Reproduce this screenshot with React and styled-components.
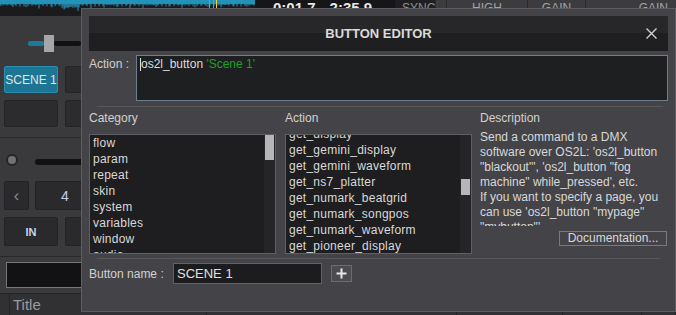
import React from "react";
import styled, { createGlobalStyle } from "styled-components";

const GlobalStyle = createGlobalStyle`
  html, body { margin: 0; padding: 0; background: #3a3a3d; }
  body { font-family: "Liberation Sans", Arial, sans-serif; }
  * { box-sizing: border-box; }
`;

const Screen = styled.div`
  position: relative;
  width: 676px;
  height: 315px;
  overflow: hidden;
  background: #3a3a3d;
  display: flex;
  flex-direction: column;
  font-family: "Liberation Sans", Arial, sans-serif;
`;

/* ---------- background skin ---------- */
const TopStrip = styled.div`
  display: flex;
  height: 16px;
  flex: none;
`;
const WaveWrap = styled.div`
  width: 255px;
  height: 16px;
  background: #1b1b1d;
`;
const TimeBox = styled.div`
  width: 140px;
  display: flex;
  gap: 14px;
  padding-left: 18px;
  background: #161618;
  color: #e8e8e8;
  font-weight: bold;
  font-size: 15px;
  line-height: 16px;
`;
const SyncBox = styled.div`
  width: 40px;
  background: #1f1f21;
  color: #8e8e90;
  font-size: 12px;
  line-height: 16px;
  padding-left: 7px;
`;
const HeadCell = styled.div`
  width: ${(p) => p.$w}px;
  flex: ${(p) => (p.$grow ? 1 : "none")};
  background: #3c3c3f;
  border-left: 1px solid #2a2a2c;
  color: #a4a4a6;
  font-size: 12px;
  line-height: 17px;
  text-align: ${(p) => p.$align || "center"};
  padding-right: ${(p) => p.$pr || 0}px;
`;

const Upper = styled.div`
  display: flex;
  height: 277px;
  flex: none;
`;
const LeftPanel = styled.div`
  width: 81px;
  display: flex;
  flex-direction: column;
`;
const SliderRow = styled.div`
  margin-top: 19px;
  height: 17px;
  display: flex;
  align-items: center;
  padding-left: 28px;
`;
const Track = styled.div`
  height: 5px;
  width: ${(p) => (p.$w ? p.$w + "px" : "auto")};
  flex: ${(p) => (p.$w ? "none" : 1)};
  background: ${(p) => p.$c};
  border-radius: 2px;
`;
const Handle = styled.div`
  width: 10px;
  height: 17px;
  background: #a6a6a8;
`;
const PadGrid = styled.div`
  margin-top: 14px;
  padding-left: 4px;
  display: grid;
  grid-template-columns: 54px 54px;
  grid-auto-rows: 27px;
  gap: 7px;
`;
const Pad = styled.div`
  border: 1px solid ${(p) => (p.$on ? "#2b8db0" : "#232325")};
  background: ${(p) => (p.$on ? "#1b7593" : "#2c2c2f")};
  color: #e4e4e4;
  font-size: 12px;
  display: flex;
  align-items: center;
  justify-content: center;
  border-radius: 2px;
`;
const Rule = styled.div`
  height: 1px;
  margin-top: ${(p) => p.$mt}px;
  background: #2a2a2c;
`;
const KnobRow = styled.div`
  margin-top: 15px;
  height: 14px;
  display: flex;
  align-items: center;
  padding-left: 6px;
  gap: 17px;
`;
const Knob = styled.div`
  width: 12px;
  height: 12px;
  border-radius: 50%;
  background: #727274;
  border: 2px solid #252527;
`;
const PitchBar = styled.div`
  flex: 1;
  height: 6px;
  margin-top: 4px;
  border-radius: 3px 0 0 3px;
  background: #111113;
`;
const NavRow = styled.div`
  margin-top: ${(p) => p.$mt}px;
  height: 29px;
  display: flex;
  gap: ${(p) => p.$gap}px;
  padding-left: 4px;
`;
const NavBtn = styled.div`
  width: ${(p) => p.$w}px;
  flex: none;
  background: #2a2a2d;
  border: 1px solid #232325;
  border-radius: 2px;
  display: flex;
  align-items: center;
  justify-content: center;
  color: ${(p) => p.$c || "#c8d4e4"};
  font-size: ${(p) => p.$fs || 12}px;
  font-weight: ${(p) => (p.$bold ? "bold" : "normal")};
`;
const SearchBox = styled.div`
  margin: 5px 0 0 6px;
  height: 26px;
  background: #121214;
  border: 1px solid #75757a;
  border-right: none;
`;
const TableHead = styled.div`
  flex: 1;
  display: flex;
  background: #313134;
  border-top: 1px solid #232325;
`;
const Col = styled.div`
  width: ${(p) => p.$w}px;
  flex: ${(p) => (p.$grow ? 1 : "none")};
  border-right: 1px solid #232325;
  color: #9a9a9c;
  font-size: 15px;
  line-height: 22px;
  padding-left: 3px;
`;

/* ---------- dialog ---------- */
const Dialog = styled.div`
  position: absolute;
  left: 81px;
  top: 8px;
  width: 595px;
  height: 304px;
  background: #444448;
  border: 1px solid #5e5e62;
  display: flex;
  flex-direction: column;
  padding: 7px 7px 0 7px;
  color: #d4d4d4;
  font-size: 12px;
`;
const TitleBar = styled.div`
  height: 35px;
  flex: none;
  position: relative;
  background: linear-gradient(#27272a 0 50%, #1f1f21 50% 100%);
  display: flex;
  align-items: center;
  justify-content: center;
  font-weight: bold;
  font-size: 13px;
  color: #dadada;
`;
const CloseBtn = styled.div`
  position: absolute;
  right: 11px;
  top: 12px;
  width: 11px;
  height: 11px;
  display: flex;
`;
const ActionRow = styled.div`
  margin-top: 4px;
  display: flex;
`;
const RowLabel = styled.div`
  width: ${(p) => p.$w}px;
  flex: none;
  line-height: 16px;
  padding-top: ${(p) => p.$pt || 0}px;
  color: #d0d0d0;
`;
const ActionField = styled.div`
  flex: 1;
  height: 46px;
  background: #1e1f21;
  border: 1px solid #6e7f90;
  padding: 0 3px;
  line-height: 16px;
  color: #dcdcdc;
  display: flex;
  align-items: flex-start;
`;
const Caret = styled.span`
  width: 1px;
  height: 13px;
  margin-top: 2px;
  background: #e0e0e0;
  flex: none;
`;
const Green = styled.span`
  color: #22a022;
  white-space: pre;
`;
const Separator = styled.div`
  height: 1px;
  background: #58585c;
  margin: ${(p) => p.$m};
  flex: none;
`;
const Columns = styled.div`
  margin-top: 3px;
  display: grid;
  grid-template-columns: 187px 187px 187px;
  column-gap: 9px;
  align-items: start;
`;
const ColBox = styled.div`
  display: flex;
  flex-direction: column;
  margin-left: ${(p) => p.$ml || 0}px;
`;
const ColHead = styled.div`
  height: 16px;
  line-height: 16px;
  color: #d0d0d0;
`;
const ListBox = styled.div`
  margin-top: 8px;
  height: 120px;
  background: #1e1e20;
  border: 1px solid #606064;
  display: flex;
  overflow: hidden;
`;
const ListItems = styled.div`
  flex: 1;
  overflow: hidden;
  padding-left: 3px;
`;
const ListInner = styled.div`
  margin-top: ${(p) => p.$offset}px;
`;
const Item = styled.div`
  height: 16px;
  line-height: 16px;
  color: #d8d8d8;
  white-space: nowrap;
  letter-spacing: 0.25px;
`;
const ScrollTrack = styled.div`
  width: 11px;
  flex: none;
  background: #252527;
  padding: 0 1px;
`;
const Thumb = styled.div`
  margin-top: ${(p) => p.$top}px;
  height: ${(p) => p.$h}px;
  background: #b6b6b8;
`;
const DescText = styled.div`
  margin-top: 4px;
  height: 96px;
  overflow: hidden;
  line-height: 15px;
  color: #d8d8d8;
  font-size: 12px;
`;
const DescLine = styled.div`
  white-space: pre;
`;
const DocButton = styled.div`
  margin-top: 5px;
  align-self: flex-end;
  margin-right: 1px;
  width: 108px;
  height: 15px;
  border: 1px solid #7a7a7e;
  line-height: 13px;
  text-align: center;
  color: #d8d8d8;
`;
const NameRow = styled.div`
  margin-top: 4px;
  display: flex;
  align-items: center;
`;
const NameInput = styled.div`
  width: 149px;
  height: 21px;
  background: #1c1c1e;
  border: 1px solid #626266;
  color: #e0e0e0;
  font-size: 13px;
  line-height: 19px;
  padding-left: 3px;
`;
const PlusBtn = styled.div`
  margin-left: 9px;
  width: 21px;
  height: 17px;
  background: #4c4c50;
  border: 1px solid #6c6c70;
  display: flex;
  align-items: center;
  justify-content: center;
`;

function Waveform() {
  const bars = [];
  for (let x = 0; x < 255; x++) {
    const h =
      3 +
      2.2 * Math.abs(Math.sin(x * 0.71) + 0.6 * Math.sin(x * 2.3)) +
      (x % 13 === 0 ? 3 : 0) +
      (x > 60 && x < 80 ? 4 * Math.abs(Math.sin(x * 1.7)) : 0);
    bars.push(`M${x} 0V${h.toFixed(1)}`);
  }
  return (
    <svg width="255" height="16" viewBox="0 0 255 16">
      <rect x="0" y="0" width="255" height="4" fill="#1f86aa" />
      <path d={bars.join("")} stroke="#2596bd" strokeWidth="1" />
      <rect x="209" y="0" width="1" height="8" fill="#d9822b" />
      <rect x="213" y="0" width="1" height="8" fill="#4aa0ff" />
      <rect x="216" y="0" width="1" height="8" fill="#f0d040" />
    </svg>
  );
}

const categories = ["flow", "param", "repeat", "skin", "system", "variables", "window", "audio"];
const actions = [
  "get_display",
  "get_gemini_display",
  "get_gemini_waveform",
  "get_ns7_platter",
  "get_numark_beatgrid",
  "get_numark_songpos",
  "get_numark_waveform",
  "get_pioneer_display",
];
const desc = [
  "Send a command to a DMX",
  "software over OS2L: 'os2l_button",
  "\"blackout\"', 'os2l_button \"fog",
  "machine\" while_pressed', etc.",
  "If you want to specify a page, you",
  "can use 'os2l_button \"mypage\"",
  "\"mybutton\"'",
];

export default function App() {
  return (
    <>
      <GlobalStyle />
      <Screen>
        <TopStrip>
          <WaveWrap>
            <Waveform />
          </WaveWrap>
          <TimeBox>
            <span>0:01.7</span>
            <span>2:35.9</span>
          </TimeBox>
          <SyncBox>SYNC</SyncBox>
          <HeadCell $w={11} />
          <HeadCell $w={81}>HIGH</HeadCell>
          <HeadCell $w={58}>GAIN</HeadCell>
          <HeadCell $grow $align="right" $pr={8}>GAIN</HeadCell>
        </TopStrip>
        <Upper>
          <LeftPanel>
            <SliderRow>
              <Track $w={16} $c="#1e7a9c" />
              <Handle />
              <Track $c="#111113" />
            </SliderRow>
            <PadGrid>
              <Pad $on>SCENE 1</Pad>
              <Pad />
              <Pad />
              <Pad />
            </PadGrid>
            <Rule $mt={10} />
            <KnobRow>
              <Knob />
              <PitchBar />
            </KnobRow>
            <NavRow $mt={14} $gap={6}>
              <NavBtn $w={25} $c="#8a8a8c" $fs={16}>‹</NavBtn>
              <NavBtn $w={60} $c="#c0d0e8" $fs={14}>4</NavBtn>
            </NavRow>
            <NavRow $mt={7} $gap={7}>
              <NavBtn $w={54} $bold $fs={11}>IN</NavBtn>
              <NavBtn $w={54} />
            </NavRow>
            <Rule $mt={10} />
            <SearchBox />
          </LeftPanel>
        </Upper>
        <TableHead>
          <Col $w={10} />
          <Col $w={197}>Title</Col>
          <Col $w={250} />
          <Col $w={106} />
          <Col $w={79} />
          <Col $grow />
        </TableHead>

        <Dialog>
          <TitleBar>
            BUTTON EDITOR
            <CloseBtn>
              <svg width="11" height="11" viewBox="0 0 11 11">
                <path d="M0.5 0.5L10.5 10.5M10.5 0.5L0.5 10.5" stroke="#d0d0d0" strokeWidth="1.4" />
              </svg>
            </CloseBtn>
          </TitleBar>
          <ActionRow>
            <RowLabel $w={47} $pt={1}>Action :</RowLabel>
            <ActionField>
              <Caret />
              <span>os2l_button</span>
              <Green> 'Scene 1'</Green>
            </ActionField>
          </ActionRow>
          <Separator $m="5px 5px 0 8px" />
          <Columns>
            <ColBox>
              <ColHead>Category</ColHead>
              <ListBox>
                <ListItems>
                  <ListInner $offset={0}>
                    {categories.map((c) => (
                      <Item key={c}>{c}</Item>
                    ))}
                  </ListInner>
                </ListItems>
                <ScrollTrack>
                  <Thumb $top={0} $h={25} />
                </ScrollTrack>
              </ListBox>
            </ColBox>
            <ColBox>
              <ColHead>Action</ColHead>
              <ListBox>
                <ListItems>
                  <ListInner $offset={-9}>
                    {actions.map((a) => (
                      <Item key={a}>{a}</Item>
                    ))}
                  </ListInner>
                </ListItems>
                <ScrollTrack>
                  <Thumb $top={44} $h={16} />
                </ScrollTrack>
              </ListBox>
            </ColBox>
            <ColBox $ml={-1}>
              <ColHead>Description</ColHead>
              <DescText>
                {desc.map((d, i) => (
                  <DescLine key={i}>{d}</DescLine>
                ))}
              </DescText>
              <DocButton>Documentation...</DocButton>
            </ColBox>
          </Columns>
          <Separator $m="4px 8px 0 8px" />
          <NameRow>
            <RowLabel $w={84}>Button name :</RowLabel>
            <NameInput>SCENE 1</NameInput>
            <PlusBtn>
              <svg width="11" height="11" viewBox="0 0 11 11">
                <path d="M5.5 0.5V10.5M0.5 5.5H10.5" stroke="#e8e8e8" strokeWidth="2" />
              </svg>
            </PlusBtn>
          </NameRow>
        </Dialog>
      </Screen>
    </>
  );
}
